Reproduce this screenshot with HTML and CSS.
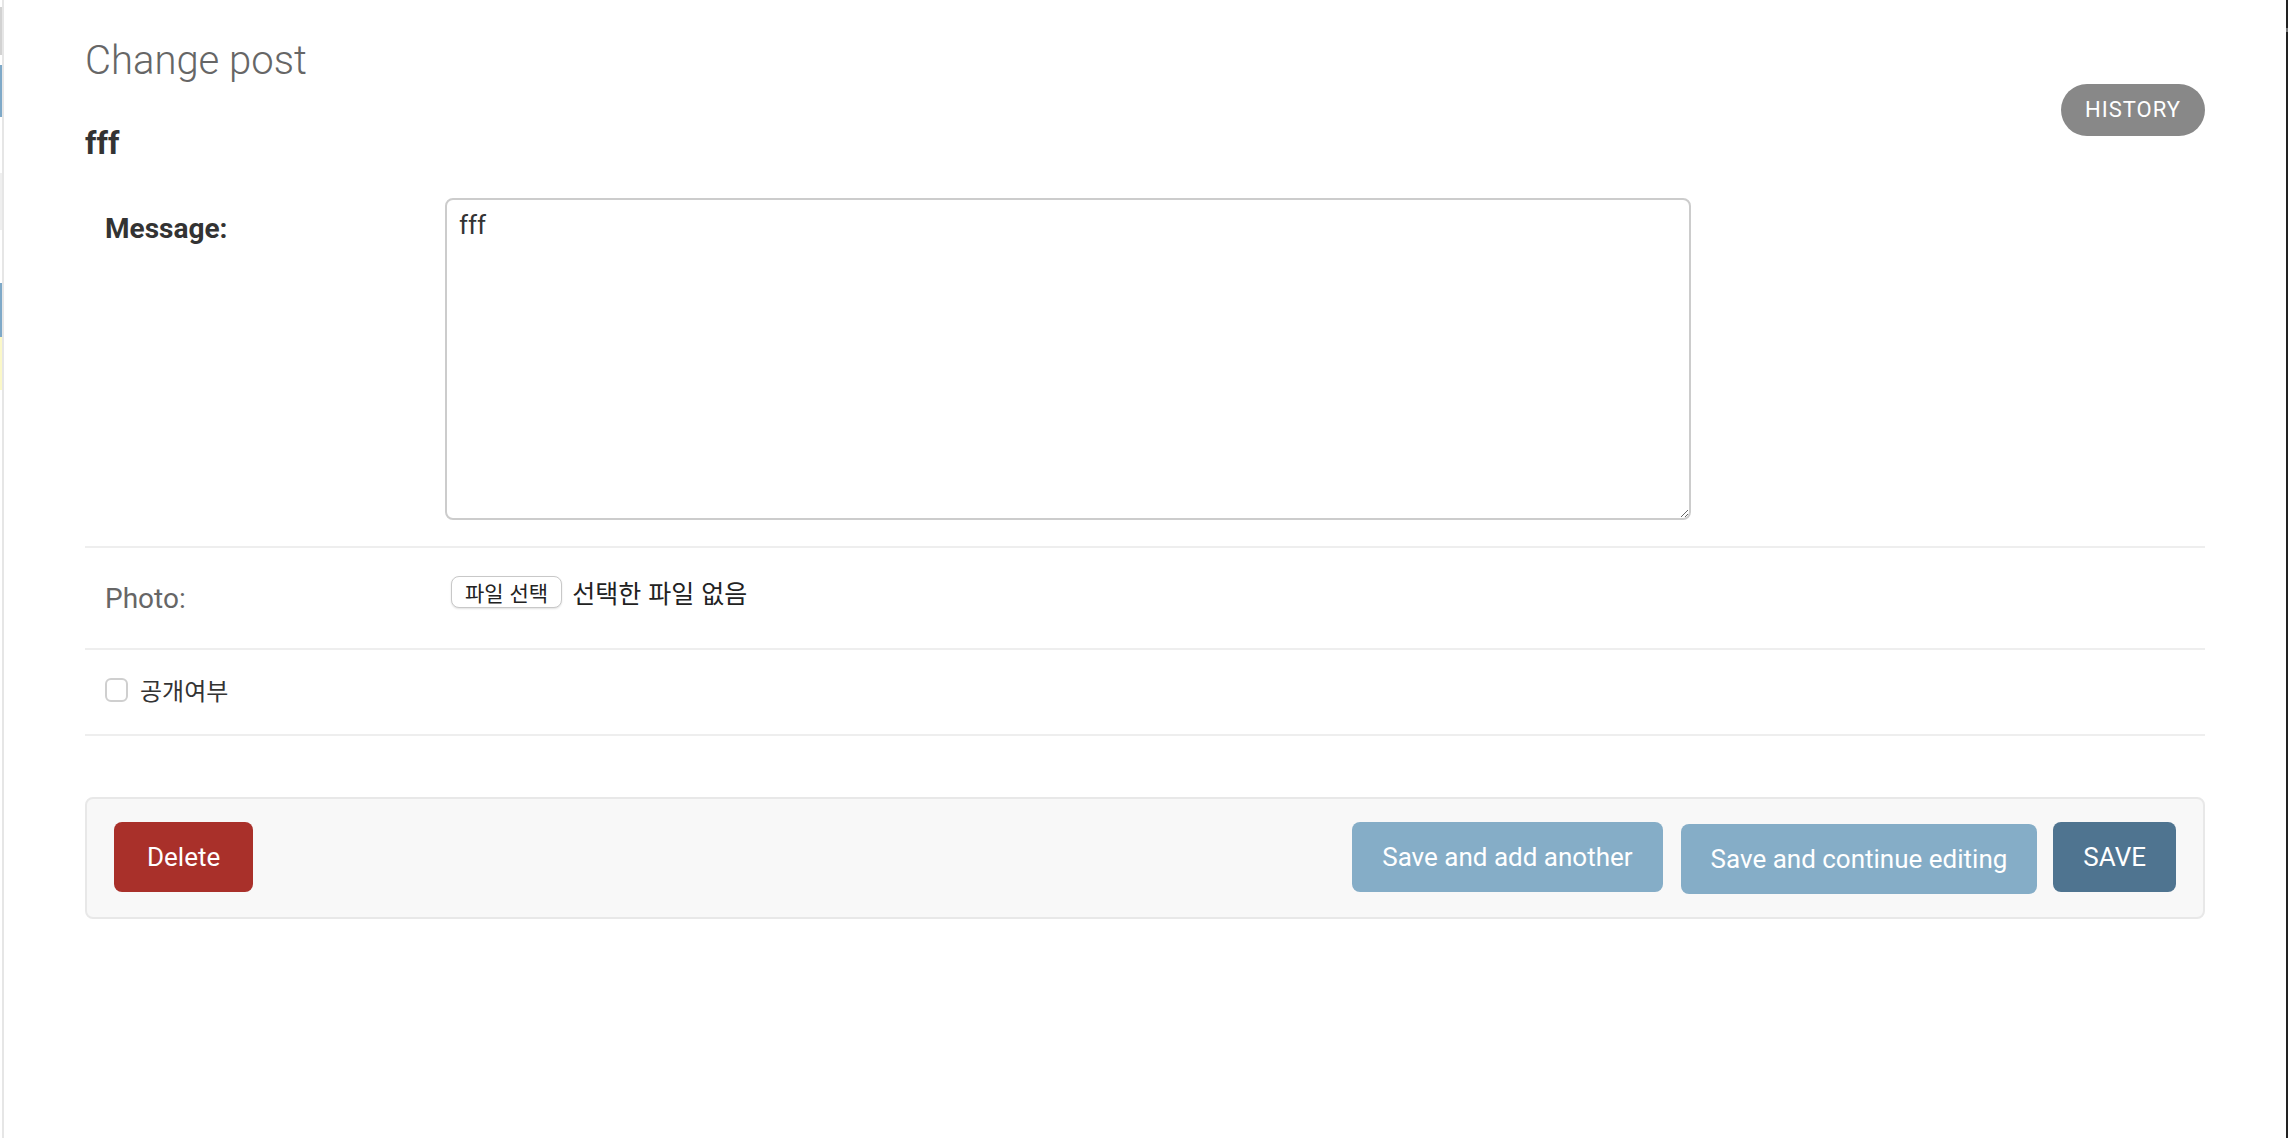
FILE: index.html
```html
<!DOCTYPE html>
<html lang="ko">
<head>
  <meta charset="UTF-8">
  <meta name="viewport" content="width=device-width, initial-scale=1.0">
  <title>Change post | Django site admin</title>
  <link rel="stylesheet" href="styles.css">
</head>
<body>
  <div class="nav-edge">
    <span class="seg seg-gray"></span>
    <span class="seg seg-blue-1"></span>
    <span class="seg seg-light"></span>
    <span class="seg seg-blue-2"></span>
    <span class="seg seg-yellow"></span>
  </div>

  <main class="content">
    <div class="content-header">
      <div class="titles">
        <h1>Change post</h1>
        <h2>fff</h2>
      </div>
      <a href="#" class="history-link">History</a>
    </div>

    <form id="post_form">
      <fieldset class="module">
        <div class="form-row">
          <label for="id_message" class="required">Message:</label>
          <textarea name="message" id="id_message">fff</textarea>
        </div>
        <div class="form-row">
          <label for="id_photo">Photo:</label>
          <div class="file-input">
            <span class="file-button">파일 선택</span>
            <span class="file-name">선택한 파일 없음</span>
          </div>
        </div>
        <div class="form-row checkbox-row">
          <input type="checkbox" name="is_public" id="id_is_public">
          <label for="id_is_public" class="checkbox-label">공개여부</label>
        </div>
      </fieldset>

      <div class="submit-row">
        <a href="#" class="deletelink">Delete</a>
        <div class="save-buttons">
          <button type="button" class="btn">Save and add another</button>
          <button type="button" class="btn btn-continue">Save and continue editing</button>
          <button type="submit" class="btn btn-default">SAVE</button>
        </div>
      </div>
    </form>
  </main>

  <div class="scroll-edge"><span class="thumb"></span></div>
</body>
</html>
```

FILE: styles.css
```css
/* General */
body {
  margin: 0;
  display: flex;
  min-height: 100vh;
  font-family: Roboto, "Noto Sans CJK KR", sans-serif;
  color: #333;
  background-color: #fff;
}

/* Left sidebar remnant */
.nav-edge {
  width: 2px;
  border-right: 2px solid #e6e6e6;
  display: flex;
  flex-direction: column;
}

.seg {
  display: block;
  width: 2px;
}

.seg-gray {
  margin-top: 7px;
  height: 48px;
  background-color: #d2d2d2;
}

.seg-blue-1 {
  margin-top: 10px;
  height: 52px;
  background-color: #7ea9c8;
}

.seg-light {
  margin-top: 56px;
  height: 57px;
  background-color: #efefef;
}

.seg-blue-2 {
  margin-top: 53px;
  height: 54px;
  background-color: #7ea9c8;
}

.seg-yellow {
  height: 53px;
  background-color: #fbf8c8;
}

/* Right window edge */
.scroll-edge {
  width: 2px;
  background-color: #222;
}

.scroll-edge .thumb {
  display: block;
  margin-top: 28px;
  height: 4px;
  background-color: #777;
}

/* Content */
.content {
  flex: 1;
  padding: 37px 81px 0;
}

.content-header {
  display: flex;
  justify-content: space-between;
  align-items: flex-start;
}

h1 {
  margin: 0;
  font-size: 40px;
  font-weight: 300;
  color: #666;
}

h2 {
  margin: 40px 0 16px;
  font-size: 32px;
  font-weight: 700;
  color: #333;
}

.history-link {
  margin-top: 47px;
  display: block;
  height: 52px;
  line-height: 52px;
  padding: 0 24px;
  border-radius: 26px;
  background-color: #888;
  color: #fff;
  font-size: 22px;
  letter-spacing: 1px;
  text-transform: uppercase;
  text-decoration: none;
}

/* Form rows */
fieldset {
  margin: 0;
  padding: 0;
  border: none;
}

.form-row {
  display: flex;
  padding: 20px;
  border-bottom: 2px solid #eee;
}

.form-row label {
  width: 340px;
  flex-shrink: 0;
  padding-top: 14px;
  font-size: 28px;
  color: #666;
}

.form-row label.required {
  font-weight: 700;
  color: #333;
}

textarea {
  width: 1246px;
  height: 322px;
  margin: 0 0 6px;
  padding: 10px 12px;
  box-sizing: border-box;
  border: 2px solid #ccc;
  border-radius: 8px;
  font-family: Roboto, sans-serif;
  font-size: 26px;
  color: #333;
  resize: vertical;
}

.file-input {
  display: flex;
  align-items: flex-start;
  height: 60px;
  padding: 8px 0 0 6px;
  box-sizing: border-box;
}

.file-button {
  height: 32px;
  line-height: 30px;
  padding: 0 13px;
  box-sizing: border-box;
  border: 1px solid #c8c8c8;
  border-radius: 8px;
  background-color: #fff;
  box-shadow: 0 1px 2px rgba(0, 0, 0, 0.12);
  font-family: "Noto Sans CJK KR", sans-serif;
  font-size: 21px;
  color: #222;
}

.file-name {
  margin-left: 10px;
  line-height: 32px;
  font-family: "Noto Sans CJK KR", sans-serif;
  font-size: 25px;
  color: #222;
}

.checkbox-row {
  height: 44px;
  align-items: flex-start;
}

.checkbox-row input {
  appearance: none;
  width: 23px;
  height: 24px;
  margin: 8px 12px 0 0;
  border: 2px solid #cfcfcf;
  border-radius: 6px;
  background-color: #fff;
}

.form-row .checkbox-label {
  width: auto;
  padding-top: 0;
  margin-top: 7px;
  line-height: 26px;
  font-family: "Noto Sans CJK KR", sans-serif;
  font-size: 24px;
  color: #333;
}

/* Submit row */
.submit-row {
  margin-top: 61px;
  display: flex;
  justify-content: space-between;
  align-items: flex-start;
  padding: 23px 27px;
  border: 2px solid #e8e8e8;
  border-radius: 8px;
  background-color: #f8f8f8;
}

.deletelink {
  display: block;
  height: 70px;
  line-height: 70px;
  padding: 0 33px;
  border-radius: 8px;
  background-color: #a9302a;
  color: #fff;
  font-size: 26px;
  text-decoration: none;
}

.save-buttons {
  display: flex;
  align-items: flex-start;
}

.btn {
  height: 70px;
  padding: 0 30px;
  margin-left: 18px;
  border: none;
  border-radius: 8px;
  background-color: #85adc7;
  color: #fff;
  font-family: Roboto, sans-serif;
  font-size: 26px;
  cursor: pointer;
}

.btn-continue {
  margin-top: 2px;
}

.btn-default {
  margin-left: 16px;
  background-color: #4f7490;
}
```
